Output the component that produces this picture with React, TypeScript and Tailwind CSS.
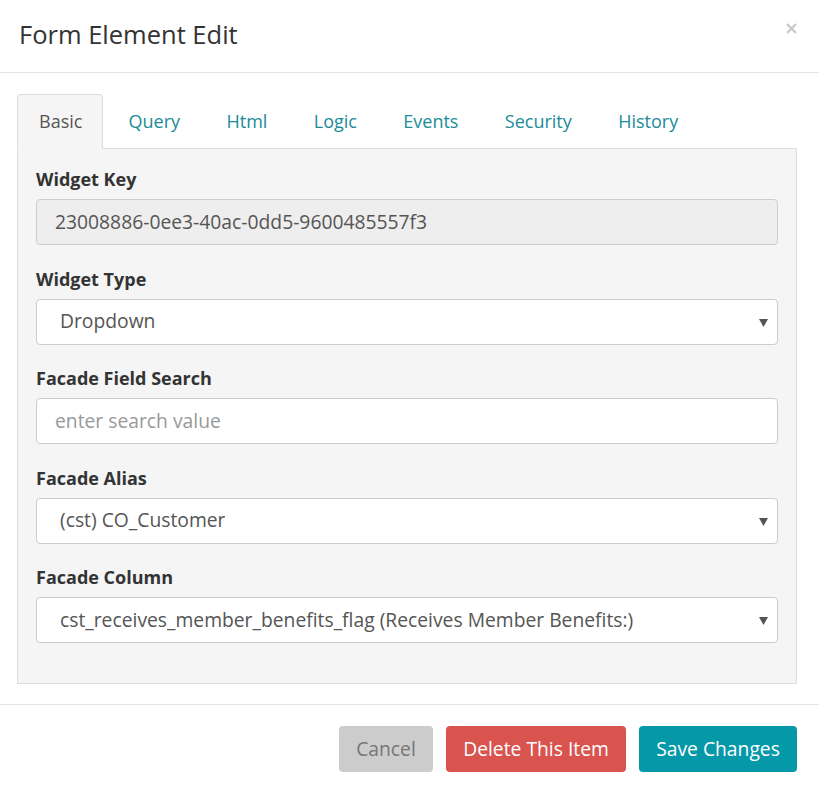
import { useState } from "react";

const tabs = ["Basic", "Query", "Html", "Logic", "Events", "Security", "History"];

function Label({ children }: { children: React.ReactNode }) {
    return <label className="block text-[18px] leading-6 font-bold text-[#333] mb-[8px]">{children}</label>;
}

function SelectBox({ value }: { value: string }) {
    return (
        <div className="relative h-[46px] bg-white border border-[#ccc] rounded-[4px] flex items-center pl-[23px] pr-8">
            <span className="text-[19.3px] text-[#555] truncate">{value}</span>
            <svg className="absolute right-[9px] top-[19px]" width="9" height="8" viewBox="0 0 9 8">
                <path d="M0 0h9L4.5 8z" fill="#555" />
            </svg>
        </div>
    );
}

export default function App() {
    const [active] = useState("Basic");

    return (
        <div className="w-[819px] h-[791px] bg-white text-[#333]" style={{ fontFamily: '"Open Sans", sans-serif' }}>
            <div className="h-[73px] border-b border-[#e5e5e5] flex items-center justify-between pl-[19px] pr-[22px]">
                <h1 className="text-[25.5px] font-normal text-[#333] leading-none -mt-[2px]">Form Element Edit</h1>
                <button className="text-[#c8c8c8] -mt-[16px]">
                    <svg width="11" height="11" viewBox="0 0 11 11">
                        <path d="M1 1l9 9M10 1l-9 9" stroke="#c8c8c8" strokeWidth="2.2" />
                    </svg>
                </button>
            </div>

            <div className="pl-[17px] pr-[22px] pt-[21px] pb-[20px] border-b border-[#e5e5e5]">
                <div className="flex">
                    {tabs.map((t) => (
                        <div
                            key={t}
                            className={
                                t === active
                                    ? "h-[55px] -mb-px pl-[21px] pr-[20px] flex items-center text-[18px] text-[#555] bg-[#f5f5f5] border border-[#ddd] border-b-[#f5f5f5] rounded-t-[4px] mr-[3px] relative z-10"
                                    : "h-[54px] px-[21.2px] flex items-center text-[18px] text-[#1b8c99] mr-[2px] border border-transparent"
                            }
                        >
                            {t}
                        </div>
                    ))}
                </div>
                <div className="bg-[#f5f5f5] border border-[#ddd] px-[18px] pt-[18px] pb-[17px] h-[536px]">
                    <div className="mb-[21.5px]">
                        <Label>Widget Key</Label>
                        <div className="h-[46px] bg-[#eee] border border-[#ccc] rounded-[4px] flex items-center pl-[18px] text-[19.3px] text-[#555]">
                            23008886-0ee3-40ac-0dd5-9600485557f3
                        </div>
                    </div>
                    <div className="mb-[21.5px]">
                        <Label>Widget Type</Label>
                        <SelectBox value="Dropdown" />
                    </div>
                    <div className="mb-[21.5px]">
                        <Label>Facade Field Search</Label>
                        <div className="h-[46px] bg-white border border-[#ccc] rounded-[4px] flex items-center pl-[18px] text-[19.3px] text-[#999]">
                            enter search value
                        </div>
                    </div>
                    <div className="mb-[21.5px]">
                        <Label>Facade Alias</Label>
                        <SelectBox value="(cst) CO_Customer" />
                    </div>
                    <div>
                        <Label>Facade Column</Label>
                        <SelectBox value="cst_receives_member_benefits_flag (Receives Member Benefits:)" />
                    </div>
                </div>
            </div>

            <div className="flex justify-end gap-[13px] pr-[22px] pt-[21px]">
                <button className="h-[46px] w-[94px] rounded-[4px] bg-[#ccc] text-[#777] text-[19.3px]">Cancel</button>
                <button className="h-[46px] w-[180px] rounded-[4px] bg-[#d9534f] text-white text-[19.3px]">Delete This Item</button>
                <button className="h-[46px] w-[158px] rounded-[4px] bg-[#0598a8] text-white text-[19.3px]">Save Changes</button>
            </div>
        </div>
    );
}
